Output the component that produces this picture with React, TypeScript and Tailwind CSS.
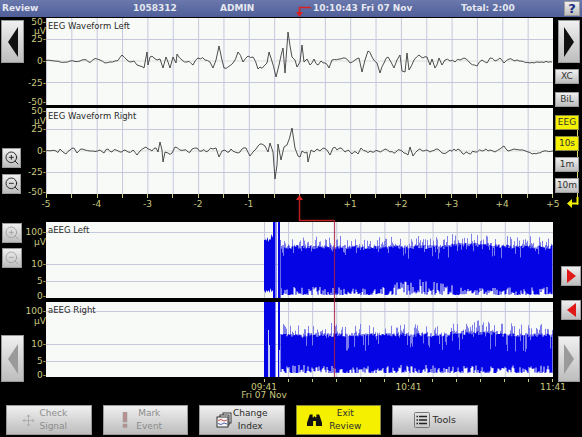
import type { ReactNode } from "react";
import { Move, ZoomIn, ZoomOut } from "lucide-react";

const LEFT_WAVE = [
  [46, 60.5], [52, 60.7], [56, 61.3], [60, 62], [65, 62.2], [70, 61], [75, 61.5], [80, 61], [86, 59.7], [90, 62.5], [95, 58.5], [100, 60],
  [105, 63], [110, 62], [115, 61], [118, 60.5], [122, 55], [127, 60], [131, 62], [134, 61], [137, 65], [140, 66], [144, 68], [147, 52],
  [148, 65], [150, 57], [154, 58], [157, 60], [160, 59], [163, 68], [166, 57], [168, 62], [170, 68], [173, 57], [176, 63], [177, 54],
  [182, 60], [187, 62], [193, 65], [198, 58], [205, 60], [210, 62], [213, 68], [216, 60], [219, 46], [222, 60], [224, 68], [233, 63],
  [238, 52], [243, 62], [248, 56], [253, 57], [258, 69], [264, 66], [267, 63], [269, 52], [271, 58], [276, 77], [279, 65], [283, 48],
  [285, 73], [288, 32], [292, 57], [295, 60], [297, 67], [300, 62], [302, 45], [304, 62], [307, 59], [310, 65], [314, 59], [318, 65],
  [321, 61], [325, 63], [329, 68], [332, 60], [339, 59], [345, 58], [350, 63], [355, 60], [359, 58], [362, 72], [365, 60], [368, 51],
  [372, 57], [377, 63], [380, 73], [384, 63], [388, 57], [391, 62], [394, 68], [397, 60], [400, 55], [402, 71], [405, 72], [407, 53],
  [409, 70], [414, 60], [419, 55], [423, 58], [427, 57], [430, 65], [432, 59], [435, 68], [439, 58], [442, 65], [445, 60], [450, 61],
  [455, 62], [460, 60], [464, 58], [470, 63], [477, 66], [482, 60], [487, 63], [490, 58], [495, 61], [500, 58], [504, 63], [509, 59],
  [519, 61], [530, 63], [536, 62], [542, 62], [552, 62],
];

const RIGHT_WAVE = [
  [46, 151], [52, 150.5], [56, 151], [58, 152.5], [60, 149], [63, 152], [66, 154], [70, 150], [74, 148], [77, 153], [81, 149], [85, 150],
  [90, 151], [95, 151.5], [100, 150], [104, 153], [108, 149], [112, 152], [116, 150], [120, 152], [124, 150], [128, 152], [133, 150],
  [137, 155], [140, 151], [144, 148], [148, 149], [152, 151], [156, 148], [158, 152], [160, 142], [162, 150], [163, 162], [165, 152],
  [168, 153], [172, 153], [175, 147], [180, 150], [184, 150], [188, 152], [192, 149], [197, 148], [202, 151], [208, 151], [213, 149],
  [216, 148], [219, 157], [222, 151], [225, 150], [229, 152], [231, 149], [235, 152], [238, 153], [242, 149], [246, 148], [250, 156],
  [253, 152], [256, 149], [258, 146], [262, 144], [265, 146], [268, 152], [270, 143], [273, 152], [275, 179], [277, 165], [278, 144],
  [281, 160], [284, 147], [287, 145], [292, 128], [295, 148], [298, 156], [300, 157], [302, 151], [305, 153], [307, 152], [308, 162],
  [311, 150], [314, 152], [317, 149], [320, 151], [324, 148], [327, 150], [330, 155], [333, 148], [337, 150], [341, 148], [345, 152],
  [348, 150], [352, 154], [356, 152], [358, 154], [361, 148], [366, 151], [372, 152], [378, 151], [385, 149], [390, 152], [396, 152],
  [400, 150], [404, 153], [408, 155], [410, 147], [413, 156], [418, 150], [424, 151], [430, 152], [436, 149], [442, 153], [450, 150],
  [458, 149], [462, 153], [468, 153], [475, 152], [482, 151], [490, 150], [495, 152], [500, 149], [504, 146], [508, 151], [514, 149],
  [520, 150], [528, 152], [532, 154], [538, 153], [544, 151], [553, 151],
];

const rng = (seed: number) => {
  let s = seed;
  return () => {
    s = (s * 1664525 + 1013904223) % 4294967296;
    return s / 4294967296;
  };
};

// the trace points are read off the picture, this adds the small wiggle between them
const roughen = (points: number[][], seed: number) => {
  const r = rng(seed);
  const out: number[][] = [];
  points.forEach((p, i) => {
    out.push(p);
    const next = points[i + 1];
    if (!next || next[0] - p[0] < 3) return;
    const steps = Math.floor((next[0] - p[0]) / 2);
    for (let k = 1; k < steps; k++) {
      const t = k / steps;
      const amp = p[0] > 100 && p[0] < 500 ? 1.8 : 0.7;
      out.push([p[0] + (next[0] - p[0]) * t, +(p[1] + (next[1] - p[1]) * t + (r() - 0.5) * amp * 2).toFixed(1)]);
    }
  });
  return out;
};

const buildBars = (seed: number, solidTop: number, floor: number, spikeUp: number, dipDown: number, wideBump: boolean) => {
  const r = rng(seed);
  let core = "";
  let pale = "";
  let dips = "";
  for (let x = 281; x < 553; x++) {
    const top = solidTop + r() * 4 - (x > 450 && x < 500 ? 2 : 0);
    const bumpZone = wideBump && x > 392 && x < 456;
    const rise = r();
    const bottom = floor - rise * rise * (bumpZone ? 16 : 8);
    core += `M${x} ${top.toFixed(1)}V${bottom.toFixed(1)}`;
    const a = r();
    if (a < 0.55) pale += `M${x + 0.5} ${(top - r() * spikeUp).toFixed(1)}V${(top + 1).toFixed(1)}`;
    if (a > 0.82) dips += `M${x + 0.5} ${top.toFixed(1)}V${(top + r() * dipDown).toFixed(1)}`;
  }
  return { core, pale, dips };
};

const TOP_BARS = buildBars(7, 245, 295, 10, 11, true);
const BOTTOM_BARS = buildBars(23, 333, 373, 11, 17, false);

const FONT = "font-['DejaVu_Sans','Liberation_Sans',sans-serif]";
const BUTTON = "border border-[#9a9a9a] bg-linear-to-b from-[#f0f0f0] to-[#bdbdbd] flex items-center justify-center";
const BLUE = "#0404e4";

const Grid = ({ x0, dx, count, top, bottom, lines }: { x0: number; dx: number; count: number; top: number; bottom: number; lines: number[] }) => (
  <g stroke="#c4c8da" strokeWidth="1" fill="none">
    {Array.from({ length: count }, (_, i) => (
      <line key={i} x1={x0 + dx * i} x2={x0 + dx * i} y1={top} y2={bottom} />
    ))}
    {lines.map((y) => (
      <line key={y} x1="46" x2="553" y1={y} y2={y} />
    ))}
  </g>
);

const Wave = ({ points, top, height, lines, zero }: { points: number[][]; top: number; height: number; lines: number[]; zero: number }) => (
  <svg viewBox={`46 ${top} 507 ${height}`} className="block w-full h-full">
    <Grid x0={46.5} dx={25.35} count={21} top={top} bottom={top + height} lines={lines} />
    <line x1="46" x2="553" y1={zero} y2={zero} stroke="#dcdcdc" />
    <polyline points={points.map((p) => p.join(",")).join(" ")} fill="none" stroke="#3a3a3a" strokeWidth="0.9" strokeLinejoin="round" />
  </svg>
);

const Aeeg = ({ top, height, lines, bars, children }: { top: number; height: number; lines: number[]; bars: { core: string; pale: string; dips: string }; children: ReactNode }) => (
  <svg viewBox={`46 ${top} 507 ${height}`} className="block w-full h-full">
    <Grid x0={264.5} dx={24.08} count={13} top={top} bottom={top + height} lines={lines} />
    <path d={bars.pale} stroke="#7f7fe8" strokeWidth="1" fill="none" />
    <path d={bars.core} stroke={BLUE} strokeWidth="1.05" fill="none" />
    <path d={bars.dips} stroke="#9a9aee" strokeWidth="0.8" fill="none" />
    {children}
  </svg>
);

const Row = ({ height, title, ticks, gutter, children }: { height: number; title: string; ticks: [string, number][]; gutter: ReactNode; children: ReactNode }) => (
  <div className="flex" style={{ height }}>
    <div className="w-[46px] shrink-0 relative">
      {gutter}
      {ticks.map(([label, y]) => (
        <span key={label} className="absolute right-0 text-[9px] leading-[8px] text-[#c9c87e]" style={{ top: y - 4 }}>
          {label}
        </span>
      ))}
    </div>
    <div className="w-[507px] relative bg-[#f8faf8]">
      {children}
      <span className="absolute left-[2px] top-[3px] text-[8.5px] leading-[10px] text-[#2a2a2a]">{title}</span>
    </div>
  </div>
);

const Triangle = ({ dir, fill, className }: { dir: "l" | "r"; fill: string; className: string }) => (
  <svg viewBox="0 0 10 30" preserveAspectRatio="none" className={className}>
    <polygon points={dir === "l" ? "10,0 0,15 10,30" : "0,0 10,15 0,30"} fill={fill} />
  </svg>
);

const SideButton = ({ label, on, className }: { label: string; on?: boolean; className: string }) => (
  <div className={`relative z-10 ml-[2px] w-[24px] h-[15px] text-[9px] text-[#333] border ${on ? "bg-[#f4f000] border-[#8a8a40] flex items-center justify-center" : BUTTON} ${className}`}>
    {label}
  </div>
);

const ActionButton = ({ children, yellow, className = "" }: { children: ReactNode; yellow?: boolean; className?: string }) => (
  <div className={`w-[85.5px] h-[30px] ${yellow ? "border border-[#8a8a40] bg-[#f4f000] flex items-center justify-center" : BUTTON} ${className}`}>
    {children}
  </div>
);

const TwoLines = ({ a, b, muted }: { a: string; b: string; muted?: boolean }) => (
  <div className={`text-center text-[9px] leading-[13px] ${muted ? "text-[#8c8c8c]" : "text-[#2c2c2c]"}`}>
    <div>{a}</div>
    <div>{b}</div>
  </div>
);

export default function App() {
  return (
    <div className={`relative flex flex-col w-[582px] h-[437px] bg-black overflow-hidden ${FONT}`}>
      <header className="h-[17px] mb-px flex items-center bg-linear-to-b from-[#6a78ac] to-[#505f98] text-[9px] font-bold text-[#e4e7f0]">
        <span className="w-[133px] pl-[2px]">Review</span>
        <span className="w-[87px]">1058312</span>
        <span className="w-[93px]">ADMIN</span>
        <span className="w-[148px]">10:10:43 Fri 07 Nov</span>
        <span className="w-[103px]">Total: 2:00</span>
        <div className={`w-[16px] h-[15px] text-[13px] text-[#1a2a80] ${BUTTON}`}>?</div>
      </header>

      <div className="flex">
        <main className="w-[553px] shrink-0">
          <Row
            height={87}
            title="EEG Waveform Left"
            ticks={[["50-", 4], ["µV", 13], ["25-", 21], ["0-", 43], ["-25-", 65], ["-50-", 84]]}
            gutter={
              <div className={`mt-[2px] ml-px w-[23px] h-[43px] ${BUTTON}`}>
                <Triangle dir="l" fill="#111" className="w-[10px] h-[30px]" />
              </div>
            }
          >
            <Wave points={roughen(LEFT_WAVE, 11)} top={18} height={87} lines={[39.5, 82.5]} zero={61} />
          </Row>
          <div className="h-[3px]" />
          <Row
            height={86}
            title="EEG Waveform Right"
            ticks={[["50-", 3], ["µV", 13], ["25-", 21], ["0-", 43], ["-25-", 64], ["-50-", 84]]}
            gutter={
              <div className="pt-[40px] pl-[2px] flex flex-col gap-[6px]">
                <div className={`w-[19px] h-[20px] ${BUTTON}`}><ZoomIn size={16} strokeWidth={1.4} color="#222" /></div>
                <div className={`w-[19px] h-[20px] ${BUTTON}`}><ZoomOut size={16} strokeWidth={1.4} color="#222" /></div>
              </div>
            }
          >
            <Wave points={roughen(RIGHT_WAVE, 37)} top={108} height={86} lines={[129.5, 172.5]} zero={151} />
          </Row>

          <div className="h-[28px] pl-[46px] text-[9px] leading-[10px] text-[#c9c87e]">
            <div className="flex justify-between">
              {Array.from({ length: 21 }, (_, i) => (
                <div key={i} className="w-px h-[4px] bg-[#c9c87e]" />
              ))}
            </div>
            <div className="flex justify-between mt-px">
              {["-5", "-4", "-3", "-2", "-1", "", "+1", "+2", "+3", "+4", "+5"].map((t) => (
                <div key={t} className="w-0 flex justify-center whitespace-nowrap">{t}</div>
              ))}
            </div>
          </div>

          <Row
            height={76}
            title="aEEG Left"
            ticks={[["100-", 10], ["µV", 20], ["10-", 42], ["5-", 59], ["0-", 74]]}
            gutter={
              <div className="pt-px pl-[2px] flex flex-col gap-[5px]">
                <div className={`w-[20px] h-[20px] ${BUTTON}`}><ZoomIn size={16} strokeWidth={1.2} color="#9a9a9a" /></div>
                <div className={`w-[20px] h-[20px] ${BUTTON}`}><ZoomOut size={16} strokeWidth={1.2} color="#9a9a9a" /></div>
              </div>
            }
          >
            <Aeeg top={222} height={76} lines={[232.5, 264.5, 281.5]} bars={TOP_BARS}>
              <path d="M264 240h1.5v-2l1 3 1-4 1 5 1-3 1 1 1-6 1.5 4V290l-1.5 2-1-4-1 5-1-3-1 2-1-2-1 3-1.5-3z" fill={BLUE} />
              <rect x="273" y="222" width="2.5" height="76" fill={BLUE} />
              <rect x="278" y="222" width="2" height="76" fill={BLUE} />
              <path d="M276.5 222V298" stroke="#9a9aee" />
              <path d="M280.5 240V298" stroke="#6a6ae6" />
            </Aeeg>
          </Row>
          <div className="h-[4px]" />
          <Row
            height={75}
            title="aEEG Right"
            ticks={[["100-", 9], ["µV", 19], ["10-", 42], ["5-", 59], ["0-", 73]]}
            gutter={
              <div className={`mt-[33px] ml-px w-[23px] h-[47px] ${BUTTON}`}>
                <Triangle dir="l" fill="#9a9a9a" className="w-[10px] h-[30px]" />
              </div>
            }
          >
            <Aeeg top={302} height={75} lines={[311.5, 344.5, 361.5]} bars={BOTTOM_BARS}>
              <rect x="264" y="302" width="9" height="75" fill={BLUE} />
              <path d="M268.5 330V377M269.5 345V377" stroke="#c8c8f4" />
              <rect x="273" y="302" width="2.5" height="75" fill={BLUE} />
              <rect x="278" y="302" width="2" height="75" fill={BLUE} />
              <path d="M279.5 350V377" stroke="#c0c0f0" />
            </Aeeg>
          </Row>

          <div className="h-[28px] pl-[264px] pt-[2px] text-[9px] leading-[8px] text-[#c9c87e]">
            <div className="flex justify-between">
              {Array.from({ length: 13 }, (_, i) => (
                <div key={i} className="w-px h-[3px] bg-[#c9c87e]" />
              ))}
            </div>
            <div className="flex justify-between mt-px">
              {["09:41", "10:41", "11:41"].map((t) => (
                <div key={t} className="w-0 flex justify-center whitespace-nowrap">{t}</div>
              ))}
            </div>
            <div className="w-0 flex justify-center whitespace-nowrap">Fri 07 Nov</div>
          </div>
        </main>

        <aside className="relative w-[29px]">
          <div className="absolute left-[24px] top-[112px] h-[75px] w-px bg-[#d8d870]" />
          <div className={`mt-[2px] ml-[5px] w-[22px] h-[43px] ${BUTTON}`}>
            <Triangle dir="r" fill="#111" className="w-[10px] h-[30px]" />
          </div>
          <SideButton label="XC" className="mt-[6px]" />
          <SideButton label="BiL" className="mt-[8px]" />
          <SideButton label="EEG" on className="mt-[8px]" />
          <SideButton label="10s" on className="mt-[6px]" />
          <SideButton label="1m" className="mt-[6px]" />
          <SideButton label="10m" className="mt-[6px]" />
          <svg viewBox="0 0 12 11" className="relative mt-[4px] ml-[14px] w-[12px] h-[11px]">
            <path d="M10.5 0V6.5H4" stroke="#f4f000" strokeWidth="2" fill="none" />
            <polygon points="0,6.5 5,2 5,11" fill="#f4f000" />
          </svg>
          <div className={`mt-[58px] ml-[8px] w-[20px] h-[20px] ${BUTTON}`}>
            <Triangle dir="r" fill="#e01818" className="w-[9px] h-[14px]" />
          </div>
          <div className={`mt-[14px] ml-[8px] w-[20px] h-[20px] ${BUTTON}`}>
            <Triangle dir="l" fill="#e01818" className="w-[9px] h-[14px]" />
          </div>
          <div className={`mt-[16px] ml-[5px] w-[22px] h-[46px] ${BUTTON}`}>
            <Triangle dir="r" fill="#9a9a9a" className="w-[10px] h-[30px]" />
          </div>
        </aside>
      </div>

      <footer className="ml-[6px] flex gap-[11px]">
        <ActionButton className="gap-[4px] pr-[8px]">
          <Move size={13} strokeWidth={1.2} color="#9a9a9a" />
          <TwoLines a="Check" b="Signal" muted />
        </ActionButton>
        <ActionButton className="gap-[8px] pr-[6px]">
          <svg viewBox="0 0 6 16" className="w-[6px] h-[16px]">
            <rect x="1" y="0" width="4" height="10" fill="#b89090" stroke="#999" strokeWidth="0.5" />
            <rect x="1" y="12" width="4" height="3.5" fill="#b89090" stroke="#999" strokeWidth="0.5" />
          </svg>
          <TwoLines a="Mark" b="Event" muted />
        </ActionButton>
        <ActionButton className="gap-[1px]">
          <svg viewBox="0 0 16 16" className="w-[16px] h-[16px]" fill="#f4f4f4" stroke="#222" strokeWidth="0.9">
            <rect x="7" y="1" width="8" height="10" />
            <rect x="4" y="3" width="9" height="10" />
            <rect x="1" y="5" width="11" height="10" />
            <path d="M2 8.5L5 7.5L8 9L11 8" stroke="#c04040" fill="none" />
            <path d="M2 11.5L5 12.5L8 11L11 12" stroke="#4050a0" fill="none" />
          </svg>
          <TwoLines a="Change" b="Index" />
        </ActionButton>
        <ActionButton yellow className="gap-[7px] pr-[8px]">
          <svg viewBox="0 0 16 14" className="w-[15px] h-[14px]" fill="#111">
            <path d="M3 1h3v3h1.5v-1h1v1H10V1h3l3 9v3.5H9.5V8h-3v5.5H0V10z" />
          </svg>
          <TwoLines a="Exit" b="Review" />
        </ActionButton>
        <ActionButton className="gap-[3px]">
          <svg viewBox="0 0 16 16" className="w-[16px] h-[16px]" fill="none" stroke="#222">
            <rect x="0.5" y="0.5" width="15" height="15" rx="1" stroke="#777" />
            <path d="M5 4.5H13M5 8H13M5 11.5H13" strokeWidth="1.6" />
            <path d="M2.5 4.5H4M2.5 8H4M2.5 11.5H4" strokeWidth="1.6" />
          </svg>
          <span className="text-[9.5px] text-[#2c2c2c]">Tools</span>
        </ActionButton>
      </footer>

      {/* cursor link between the trend and the waveform */}
      <svg viewBox="0 0 582 437" className="absolute inset-0 w-[582px] h-[437px] pointer-events-none" fill="none">
        <path d="M311 7.5H299.5V13" stroke="#d82020" strokeWidth="1.6" />
        <polygon points="299.5,17 296,12 303,12" fill="#d82020" />
        <polygon points="299.5,195 296,200 303,200" fill="#d82020" />
        <path d="M299.5 199V220.5H334" stroke="#b82020" strokeWidth="1.5" />
        <path d="M334.5 220V377" stroke="#a82048" strokeWidth="1.2" opacity="0.85" />
      </svg>
    </div>
  );
}
